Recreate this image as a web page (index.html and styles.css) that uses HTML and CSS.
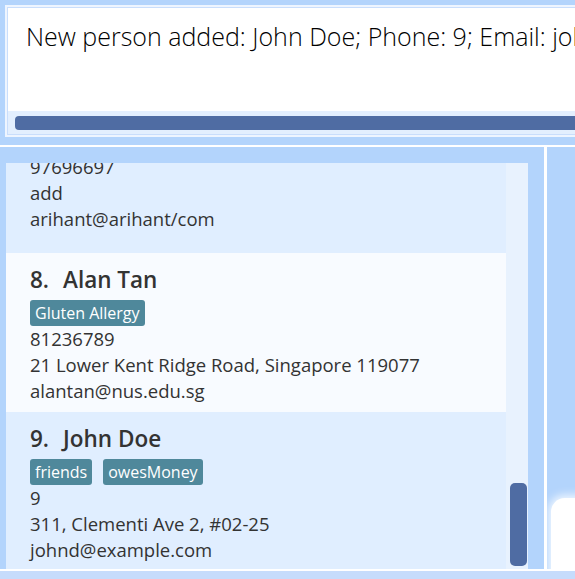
FILE: index.html
```html
<!DOCTYPE html>
<html>
<head>
<meta charset="utf-8">
<link rel="stylesheet" href="styles.css">
</head>
<body>
<div class="app">
  <div class="result-area">
    <div class="result-box">
      <div class="result-inner">
        <div class="result-text">New person added: John Doe; Phone: 9; Email: johnd@example.com; Address: 311, Clementi Ave 2, #02-25; Tags: [friends][owesMoney]</div>
        <div class="hscroll"><div class="hthumb"></div></div>
      </div>
    </div>
  </div>
  <div class="sep-line"></div>
  <div class="main">
    <div class="list-panel">
      <div class="list-view">
        <div class="cells">
          <div class="cell cell-alt cell-partial">
            <div class="line">97696697</div>
            <div class="line">add</div>
            <div class="line">arihant@arihant/com</div>
          </div>
          <div class="cell cell-light">
            <div class="name"><span class="idx">8.</span>Alan Tan</div>
            <div class="tags"><span class="tag">Gluten Allergy</span></div>
            <div class="line">81236789</div>
            <div class="line">21 Lower Kent Ridge Road, Singapore 119077</div>
            <div class="line">alantan@nus.edu.sg</div>
          </div>
          <div class="cell cell-alt">
            <div class="name"><span class="idx">9.</span>John Doe</div>
            <div class="tags"><span class="tag">friends</span><span class="tag">owesMoney</span></div>
            <div class="line">9</div>
            <div class="line">311, Clementi Ave 2, #02-25</div>
            <div class="line">johnd@example.com</div>
          </div>
        </div>
        <div class="vtrack"><div class="vthumb"></div></div>
      </div>
    </div>
    <div class="divider"></div>
    <div class="right-panel">
      <div class="card"></div>
    </div>
  </div>
  <div class="bottom-line"></div>
  <div class="status"></div>
</div>
</body>
</html>
```
FILE: styles.css
```css
html, body {
  margin: 0;
  padding: 0;
}
body {
  width: 575px;
  height: 579px;
  overflow: hidden;
  background: #b3d4fc;
  font-family: "Open Sans", "Noto Sans", sans-serif;
  color: #333;
}
.app {
  display: flex;
  flex-direction: column;
  height: 579px;
}
.result-area {
  padding: 5px 0 0 5px;
  height: 140px;
  box-sizing: border-box;
  overflow: hidden;
}
.result-box {
  width: 640px;
  height: 132px;
  box-sizing: border-box;
  border: 2px solid #eef5ff;
}
.result-inner {
  height: 100%;
  box-sizing: border-box;
  border: 1px solid #c9defc;
  background: #fff;
  display: flex;
  flex-direction: column;
}
.result-text {
  flex: 1;
  padding: 11px 0 0 18px;
  font-size: 25px;
  font-weight: 300;
  color: #000;
  white-space: nowrap;
  line-height: 34px;
}
.hscroll {
  height: 23px;
  background: #e3effe;
  padding: 5px 0 0 7px;
  box-sizing: border-box;
}
.hthumb {
  height: 14px;
  background: #4f6ca3;
  border-radius: 4px;
}
.sep-line {
  height: 2px;
  background: #fff;
  margin-top: 5px;
}
.main {
  display: flex;
  height: 422px;
}
.list-panel {
  width: 544px;
  padding: 16px 16px 0 6px;
  box-sizing: border-box;
}
.list-view {
  display: flex;
  height: 406px;
  overflow: hidden;
}
.cells {
  width: 500px;
  overflow: hidden;
}
.cell {
  padding: 11px 0 8px 24px;
}
.cell-alt {
  background: #e0eeff;
}
.cell-light {
  background: #f8fbff;
}
.cell-partial {
  margin-top: -20px;
  padding-bottom: 21px;
}
.name {
  font-size: 22.5px;
  font-weight: 600;
  line-height: 32px;
  color: #333;
  white-space: nowrap;
}
.idx {
  display: inline-block;
  width: 33px;
}
.tags {
  display: flex;
  gap: 11px;
  margin-top: 4px;
  height: 26px;
}
.tag {
  background: #4f889b;
  color: #fff;
  font-size: 16px;
  line-height: 26px;
  padding: 0 5px;
  border-radius: 3px;
}
.line {
  font-size: 18.5px;
  line-height: 26px;
  white-space: nowrap;
}
.vtrack {
  width: 22px;
  background: #e8f2fe;
  position: relative;
}
.vthumb {
  position: absolute;
  left: 4px;
  top: 320px;
  width: 17px;
  height: 83px;
  border-radius: 5px;
  background: #4f6ca3;
}
.divider {
  width: 3px;
  background: #fff;
}
.right-panel {
  flex: 1;
  padding: 351px 0 0 4px;
  overflow: hidden;
}
.card {
  width: 60px;
  height: 100px;
  background: #fff;
  border-radius: 14px;
  box-shadow: 0 0 8px 3px rgba(255, 255, 255, 0.8);
}
.bottom-line {
  height: 2px;
  background: #fff;
}
.status {
  flex: 1;
  background: #c6dcfc;
}
```
